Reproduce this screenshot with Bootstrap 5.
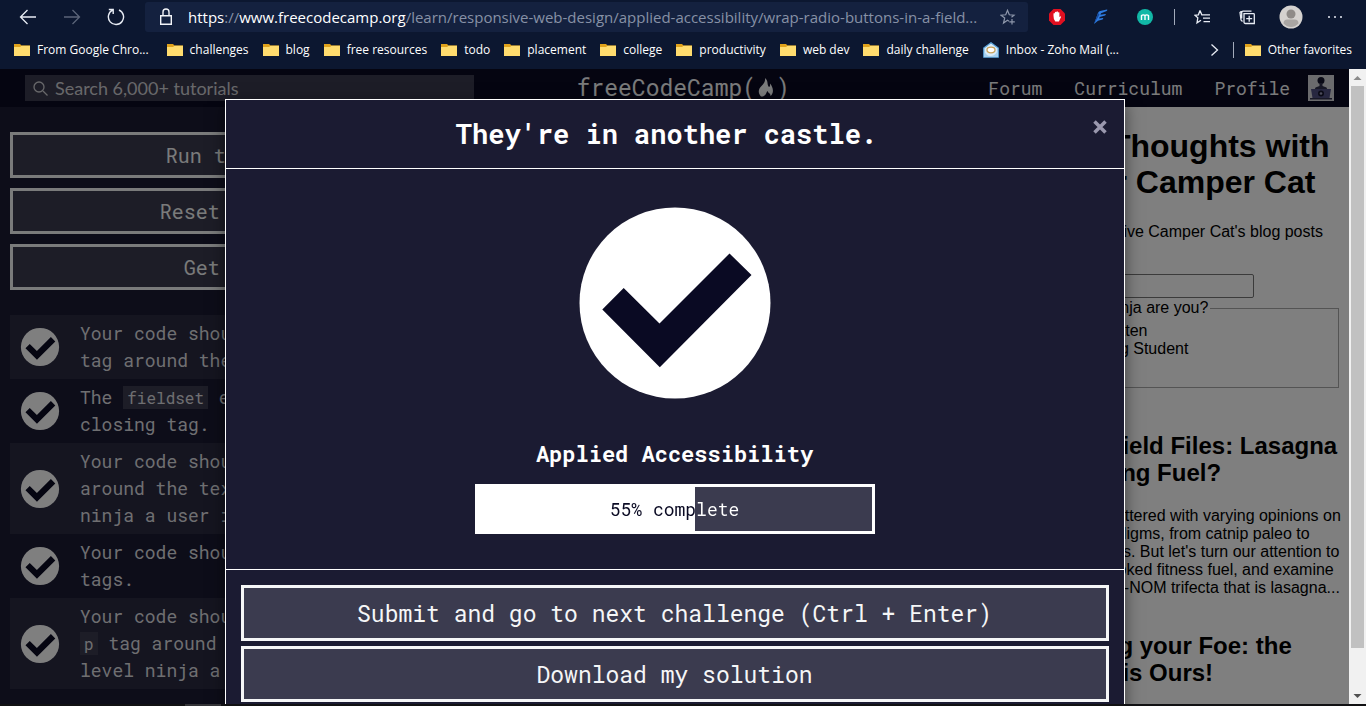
<!DOCTYPE html>
<html lang="en">
<head>
<meta charset="utf-8">
<meta name="viewport" content="width=device-width, initial-scale=1">
<title>Wrap Radio Buttons in a Fieldset | freeCodeCamp.org</title>
<link href="https://cdn.jsdelivr.net/npm/bootstrap@5.3.0/dist/css/bootstrap.min.css" rel="stylesheet">
<style>
  :root { --chrome: #0c1730; --mono: "Roboto Mono", "Liberation Mono", monospace; --ui: "Open Sans", "Noto Sans", sans-serif; --doc: "Liberation Sans", Arial, sans-serif; }
  body { background: #111113; font-family: var(--mono); }

  /* browser chrome */
  .browser-bar { background: var(--chrome); font-family: var(--ui); color: #fff; }
  .tool-row { height: 34px; padding: 0 9px 0 6px; }
  .tool-btn { width: 44px; height: 34px; padding: 0; border: 0; background: none; color: #e8ecf4; display: flex; align-items: center; justify-content: center; flex: none; }
  .tool-btn:disabled { color: #5b6478; }
  .tool-sep { width: 14px; display: flex; justify-content: center; }
  .v-line { width: 1px; height: 16px; background: #a3abbb; }
  .address { height: 30px; margin: 0 7px; padding: 0 12px 0 14px; background: #14213f; border-radius: 3px; font-size: 15px; line-height: 30px; }
  .url-text { margin-left: 15px; color: #8791a6; }
  .url-text b { font-weight: 400; color: #fff; }
  .fav-row { height: 35px; padding: 0 14px 4px; font-size: 12px; }
  .fav-row a { color: #fff; text-decoration: none; white-space: nowrap; gap: 7px; }
  .fav-row .fav-end { gap: 14px; }
  .fav-list { gap: 14px; }

  /* page frame */
  .site-nav { background: #0a0a23; height: 38px; }
  .left-col { width: 36%; flex: none; }
  .search-box { height: 26px; background: #3b3b4f; color: #d0d0d5; padding-left: 8px; gap: 7px; margin: 0 12px 0 25px; }
  .search-box input { background: none; border: 0; outline: 0; padding: 0; font: 18px Lato, sans-serif; min-width: 0; }
  .search-box input::placeholder { color: #d0d0d5; opacity: 1; }
  .logo-mark { color: #f5f6f7; font-size: 23px; line-height: 26px; margin-left: 91px; margin-top: -3px; }
  .site-links { font-size: 18px; gap: 32px; padding-right: 15px; }
  .site-links a { color: #f5f6f7; text-decoration: none; }
  .profile-group { gap: 18px; }
  .work-area { background: #1b1b32; }
  .instructions { padding: 25px 8px 0 10px; color: #f5f6f7; }
  .tool-stack { gap: 10px; margin-bottom: 25px; }
  .frame-btn { display: block; width: 100%; border: 3px solid #f5f6f7; border-radius: 0; background: #3b3b4f; color: #f5f6f7; }
  .frame-btn.tool { font-size: 20px; height: 46px; }
  .test-row { padding: 5px 10px; gap: 20px; font-size: 18px; line-height: 27px; color: #dfdfe2; }
  .test-row:nth-child(odd) { background: #2a2a40; }
  .test-row code { font: 16px var(--mono); background: #3b3b4f; color: #dfdfe2; padding: 1px 4px; }

  .preview { width: 25%; flex: none; background: #fff; color: #000; font: 16px/18px var(--doc); padding-right: 6px; margin-left: auto; }
  .preview h1 { font-size: 32px; line-height: 36px; font-weight: 700; margin: 21px 0 23px; padding-left: 12px; }
  .preview h2 { font-size: 24px; line-height: 27px; font-weight: 700; margin: 0 0 21px; padding: 0 4px 0 12px; }
  .preview p { margin: 0 0 15px; }
  .preview form { padding-left: 4px; margin-bottom: 20px; }
  .preview form p { padding-right: 8px; }
  .preview p + h2 { margin-top: 35px; }
  .preview .mail { height: 24px; width: 189px; border: 1px solid #767676; border-radius: 2px; }
  .preview fieldset { border: 1px solid #a8a8a8; margin: 1px 4px 0 2px; padding: 5px 8px 11px; }
  .preview legend { float: none; width: auto; font-size: 16px; line-height: 18px; padding: 0 2px; margin: 0; }
  .preview input[type=radio] { margin: 0 5px 0 4px; vertical-align: -1px; }

  .scroll-track { width: 17px; background: #f1f1f1; flex: none; padding: 0 2px; }
  .scroll-track svg { display: block; }
  .scroll-thumb { flex: 0 0 88.5%; width: 13px; background: #c1c1c1; }

  /* completion dialog */
  .veil { background: rgba(0, 0, 0, .5); }
  .done-dialog { width: 900px; max-width: 94%; margin: 30px auto 0; background: #1b1b32; color: #fff; border: 1px solid #fff; box-shadow: 0 5px 15px rgba(0, 0, 0, .5); }
  .done-head { height: 69px; padding: 0 16px; border-bottom: 1px solid #fff; }
  .done-head h2 { font-size: 27px; font-weight: 700; line-height: 36px; margin: 0; }
  .close-x { width: 16px; height: 16px; padding: 0; border: 0; background: none; color: #9a98ae; display: flex; margin-bottom: 14px; }
  .done-body { padding: 34px 15px 35px; border-bottom: 1px solid #fff; }
  .done-body h3 { font-size: 22px; font-weight: 700; line-height: 32px; margin: 35px 0 14px; }
  .done-meter { width: 400px; max-width: 100%; height: 50px; border: 3px solid #fff; line-height: 44px; font-size: 18px; background: linear-gradient(to right, #fff var(--done), #3b3b4f var(--done)); }
  .done-meter span { display: block; color: transparent; background: linear-gradient(to right, #0a0a23 var(--done), #fff var(--done)); -webkit-background-clip: text; background-clip: text; }
  .done-foot { padding: 15px; gap: 5px; }
  .frame-btn.big { font-size: 23px; height: 56px; }
  .os-strip { height: 2px; background: #111113; padding-left: 185px; flex: none; }
  .os-strip i { display: block; width: 36px; height: 2px; background: #333337; }
</style>
</head>
<body class="vh-100 d-flex flex-column overflow-hidden">

<svg width="0" height="0" class="d-none">
  <symbol id="folder" viewBox="0 0 16 16"><path d="M0 2h6l1.500 1.500H16V14H0z" fill="#e0a21b"/><path d="M0 5h6l1.500-1.200H16V14H0z" fill="#ffdc6e"/></symbol>
  <symbol id="passed" viewBox="0 0 200 200"><circle cx="100" cy="100" r="95.500" fill="#fff"/><path d="M27.300 106.500 48.700 85l35.800 35.500 70-70 22 21.500-91.700 92.300z" fill="#0a0a23"/></symbol>
</svg>

<header class="browser-bar flex-shrink-0">
  <div class="tool-row d-flex align-items-center">
    <button class="tool-btn" aria-label="Back"><svg width="18" height="16" fill="none" stroke="currentColor" stroke-width="1.300"><path d="M17 8H1.500M8.500 1l-7 7 7 7"/></svg></button>
    <button class="tool-btn" aria-label="Forward" disabled><svg width="18" height="16" fill="none" stroke="currentColor" stroke-width="1.300"><path d="M1 8h15.500M9.500 1l7 7-7 7"/></svg></button>
    <button class="tool-btn" aria-label="Reload"><svg width="18" height="18" fill="none" stroke="currentColor" stroke-width="1.400"><path d="M12 2A7.600 7.600 0 1 1 5.500 2.200M1.800 1.500h4.400V6"/></svg></button>
    <div class="address d-flex align-items-center flex-fill overflow-hidden" role="textbox" aria-label="Address">
      <svg class="flex-shrink-0" width="14" height="18" fill="none" stroke="#f2f4f8" stroke-width="1.400"><path d="M1.700 7.700h10.600v8.600H1.700zM4 7.500V4a3 3 0 0 1 6 0v3.500"/></svg>
      <span class="url-text text-nowrap"><b>https</b>://<b>www.freecodecamp.org</b>/learn/responsive-web-design/applied-accessibility/wrap-radio-buttons-in-a-field...</span>
      <svg class="ms-auto flex-shrink-0" width="16" height="16" fill="none" stroke="#8d96aa" stroke-width="1.200"><path d="M9 12.200 7.500 11.200 3.500 14l1.200-5L1 6.200l4.700-.4 1.800-4.500 1.800 4.500 4.700.4-2.500 2M12 10v5.500M9.300 12.800h5.500"/></svg>
    </div>
    <button class="tool-btn" aria-label="Ad blocker"><svg width="18" height="18"><path d="M5.500 1h7L17 5.500v7L12.500 17h-7L1 12.500v-7z" fill="#e01020"/><path d="M5.500 8V5.500q.8-.8 1.400 0V4.200q.8-.9 1.500 0V3.800q.8-.9 1.500 0v.7q.9-.7 1.500.1V9l1.200-.8q1 .2.200 1.400L10.900 13.500H7.300Q5.500 12 5.500 8z" fill="#fff"/></svg></button>
    <button class="tool-btn" aria-label="Editor extension"><svg width="18" height="18"><path d="M2 16 6 5q.6-1.500 2-2l7-1.500q1 .4-.3 1.400L9 5.200l-.6 1.500L13.500 6q1 .5-.5 1.500L7.700 9l-.5 1.500L11 10q.8.500-.4 1.400L6 12.800z" fill="#2e7be0"/><path d="M2 16 6 5l1.500 1.500z" fill="#174a9c"/></svg></button>
    <button class="tool-btn" aria-label="Extension m"><svg width="18" height="18"><circle cx="9" cy="9" r="8" fill="#12b8a6"/><path d="M5.500 12V7.500q1.700-1.300 3.500 0V12M9 7.500q1.800-1.300 3.500 0V12" fill="none" stroke="#fff" stroke-width="1.400"/></svg></button>
    <span class="tool-sep"><span class="v-line"></span></span>
    <button class="tool-btn" aria-label="Favorites"><svg width="18" height="16" fill="none" stroke="currentColor" stroke-width="1.300"><path d="M6 1.500 4.400 5.800 1 6.200l2.800 2.600L3 13.800l4-2.600M6 1.500l1.800 4.300H16M9 9.200h7M9.500 12.600H16"/></svg></button>
    <button class="tool-btn" aria-label="Collections"><svg width="18" height="18" fill="none" stroke="currentColor" stroke-width="1.300"><path d="M6 5.700h9.500q.8 0 .8.800v9H7.500q-1.500 0-1.500-1.500zM11.200 7.700v6M8.200 10.700h6M4.500 13.500 3 12 2 4.500l1-.8 1.500-.2M3.700 10.500V4.500q0-1.300 1.300-1.300h8.500"/></svg></button>
    <button class="tool-btn" aria-label="Account"><svg width="24" height="24"><circle cx="12" cy="12" r="11.500" fill="#d5d2cf"/><circle cx="12" cy="9" r="4.500" fill="#8f8b88"/><path d="M4.500 18.500q0-4 4-4h7q4 0 4 4Q16 22 12 22t-7.500-3.500z" fill="#a9a5a2"/></svg></button>
    <button class="tool-btn" aria-label="Settings and more"><svg width="16" height="4" fill="currentColor"><circle cx="2" cy="2" r="1"/><circle cx="8" cy="2" r="1"/><circle cx="14" cy="2" r="1"/></svg></button>
  </div>
  <nav class="fav-row d-flex align-items-center" aria-label="Favorites bar">
    <div class="fav-list d-flex">
      <a href="#" class="d-flex align-items-center"><svg width="16" height="16"><use href="#folder"/></svg>From Google Chro...</a>
      <a href="#" class="d-flex align-items-center ms-1"><svg width="16" height="16"><use href="#folder"/></svg>challenges</a>
      <a href="#" class="d-flex align-items-center"><svg width="16" height="16"><use href="#folder"/></svg>blog</a>
      <a href="#" class="d-flex align-items-center"><svg width="16" height="16"><use href="#folder"/></svg>free resources</a>
      <a href="#" class="d-flex align-items-center"><svg width="16" height="16"><use href="#folder"/></svg>todo</a>
      <a href="#" class="d-flex align-items-center"><svg width="16" height="16"><use href="#folder"/></svg>placement</a>
      <a href="#" class="d-flex align-items-center"><svg width="16" height="16"><use href="#folder"/></svg>college</a>
      <a href="#" class="d-flex align-items-center"><svg width="16" height="16"><use href="#folder"/></svg>productivity</a>
      <a href="#" class="d-flex align-items-center"><svg width="16" height="16"><use href="#folder"/></svg>web dev</a>
      <a href="#" class="d-flex align-items-center"><svg width="16" height="16"><use href="#folder"/></svg>daily challenge</a>
      <a href="#" class="d-flex align-items-center"><svg width="16" height="16"><path d="M.8 6 8 .8 15.200 6v9.200H.8z" fill="#d9ecfa" stroke="#5aa2d8" stroke-width="1.300"/><path d="M1 8q2 6.500 7 6t7-6v7H1z" fill="#a5d0f0"/><ellipse cx="8" cy="8" rx="4" ry="2.800" fill="#fff" stroke="#c9a25a" stroke-width="1.300"/></svg>Inbox - Zoho Mail (...</a>
    </div>
    <div class="fav-end ms-auto d-flex align-items-center">
      <svg width="9" height="14" fill="none" stroke="#e8ecf4" stroke-width="1.300"><path d="M1.500 1.500 7.500 7l-6 5.500"/></svg>
      <a href="#" class="d-flex align-items-center"><span class="v-line me-1"></span><svg width="16" height="16"><use href="#folder"/></svg>Other favorites</a>
    </div>
  </nav>
</header>

<div class="d-flex flex-fill overflow-hidden">
  <div class="position-relative flex-fill d-flex flex-column overflow-hidden">
    <nav class="site-nav d-flex align-items-center flex-shrink-0">
      <div class="left-col">
        <label class="search-box d-flex align-items-center">
          <svg width="15" height="15" fill="none" stroke="currentColor" stroke-width="1.300"><circle cx="6" cy="6" r="5"/><path d="m10 10 4.500 4.500"/></svg>
          <input type="text" class="flex-fill" placeholder="Search 6,000+ tutorials" aria-label="Search">
        </label>
      </div>
      <a href="#" class="logo-mark d-flex align-items-center text-decoration-none"><span>freeCodeCamp(</span><svg width="20" height="22" fill="#f5f6f7"><path d="M9 2c4 3.500 1.500 6.500 4 9 1.500-1 1-2.500 1-3.500 3 3.500 4.500 9 .5 12.500 0-3-2-2.500-3-5-1.500 1.500-.5 3.500-4.500 5.500h-2C1.500 16.500 2.500 13 5.500 10 8 7.500 9.500 5 9 2z"/></svg><span>)</span></a>
      <div class="site-links ms-auto d-flex align-items-center">
        <a href="#">Forum</a><a href="#">Curriculum</a>
        <div class="profile-group d-flex align-items-center"><a href="#">Profile</a>
        <svg width="26" height="26"><path d="M0 0h26v26H0z" fill="#d6d6da"/><circle cx="13" cy="5.500" r="3.500" fill="#15152c"/><path d="M11.500 8h3v3l4 1.500 3 7h-17l3-7 4-1.500z" fill="#30304c"/><path d="M3 14h20l-1.500 9h-17z" fill="#4e4e80"/><circle cx="13" cy="18.500" r="3" fill="#15152c"/><circle cx="13" cy="18.500" r="1.300" fill="#9a9ab8"/><path d="M2 23h22v1.500H2z" fill="#30304c"/></svg></div>
      </div>
    </nav>

    <main class="work-area d-flex flex-fill overflow-hidden">
      <section class="left-col instructions">
        <div class="tool-stack d-grid">
          <button class="frame-btn tool">Run the Tests</button>
          <button class="frame-btn tool">Reset All Code</button>
          <button class="frame-btn tool">Get a Hint</button>
        </div>
        <div>
          <div class="test-row d-flex align-items-center"><svg class="flex-shrink-0" width="40" height="40"><use href="#passed"/></svg><span>Your code should have a<br>tag around the buttons.</span></div>
          <div class="test-row d-flex align-items-center"><svg class="flex-shrink-0" width="40" height="40"><use href="#passed"/></svg><span>The <code>fieldset</code> element has a<br>closing tag.</span></div>
          <div class="test-row d-flex align-items-center"><svg class="flex-shrink-0" width="40" height="40"><use href="#passed"/></svg><span>Your code should have a<br>around the text what<br>ninja a user is.</span></div>
          <div class="test-row d-flex align-items-center"><svg class="flex-shrink-0" width="40" height="40"><use href="#passed"/></svg><span>Your code should have no<br>tags.</span></div>
          <div class="test-row d-flex align-items-center"><svg class="flex-shrink-0" width="40" height="40"><use href="#passed"/></svg><span>Your code should have a<br><code>p</code> tag around the text<br>level ninja a user is.</span></div>
        </div>
      </section>

      <section class="preview">
        <h1>Deep Thoughts with Master Camper Cat</h1>
        <form>
          <p>Sign up to receive Camper Cat's blog posts by email here!</p>
          <label for="email">Email:</label>
          <input class="mail" type="email" id="email">
          <fieldset>
            <legend>What level ninja are you?</legend>
            <input id="newbie" type="radio" name="levels"><label for="newbie">Newbie Kitten</label><br>
            <input id="inter" type="radio" name="levels"><label for="inter">Developing Student</label><br>
            <input id="master" type="radio" name="levels"><label for="master">Master</label>
          </fieldset>
          <button type="submit">Submit</button>
        </form>
        <h2>The Garfield Files: Lasagna as Training Fuel?</h2>
        <p>The internet is littered with varying opinions on nutritional paradigms, from catnip paleo to hairball cleanses. But let's turn our attention to an often overlooked fitness fuel, and examine the protein-carb-NOM trifecta that is lasagna...</p>
        <h2>Defeating your Foe: the Red Dot is Ours!</h2>
      </section>
    </main>

    <div class="veil position-absolute top-0 start-0 w-100 h-100 overflow-hidden">
      <div class="done-dialog" role="dialog" aria-labelledby="done-title">
        <div class="done-head d-flex align-items-center">
          <h2 id="done-title" class="flex-fill text-center">They're in another castle.</h2>
          <button class="close-x" aria-label="Close"><svg width="16" height="16" stroke="currentColor" stroke-width="3.500"><path d="m2.500 2.500 11 11M13.500 2.500l-11 11"/></svg></button>
        </div>
        <div class="done-body text-center d-flex flex-column align-items-center">
          <svg width="200" height="200" role="img" aria-label="Passed"><use href="#passed"/></svg>
          <h3>Applied Accessibility</h3>
          <div class="done-meter" style="--done:55%" role="progressbar" aria-valuenow="55" aria-valuemin="0" aria-valuemax="100"><span>55% complete</span></div>
        </div>
        <div class="done-foot d-grid">
          <button class="frame-btn big">Submit and go to next challenge (Ctrl + Enter)</button>
          <button class="frame-btn big">Download my solution</button>
        </div>
      </div>
    </div>
  </div>

  <div class="scroll-track d-flex flex-column" aria-hidden="true">
    <svg class="flex-shrink-0" width="13" height="17"><path d="m2.500 11 4-4 4 4z" fill="#8a8a8a"/></svg>
    <div class="scroll-thumb"></div>
    <svg class="flex-shrink-0 mt-auto" width="13" height="17"><path d="m2.500 7 4 4 4-4z" fill="#505050"/></svg>
  </div>
</div>
<div class="os-strip" aria-hidden="true"><i></i></div>

<script src="https://cdn.jsdelivr.net/npm/bootstrap@5.3.0/dist/js/bootstrap.bundle.min.js"></script>
</body>
</html>
